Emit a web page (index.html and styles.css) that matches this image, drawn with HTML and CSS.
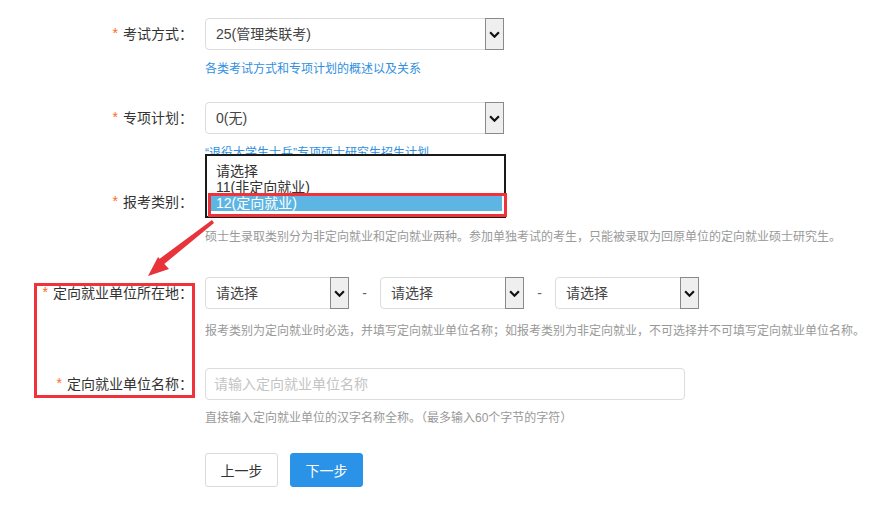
FILE: index.html
```html
<!DOCTYPE html>
<html lang="zh">
<head>
<meta charset="utf-8">
<title>报考信息</title>
<link rel="stylesheet" href="styles.css">
</head>
<body>
<div class="page">
  <form class="form">
    <div class="row r1">
      <label class="label"><span class="star">*</span>考试方式：</label>
      <div class="field">
        <div class="select w-full"><span class="sel-text">25(管理类联考)</span><span class="sel-btn"><svg viewBox="0 0 10 6" width="11" height="7"><path d="M1 1 L5 5 L9 1" fill="none" stroke="#111" stroke-width="2"/></svg></span></div>
        <a class="link" href="#">各类考试方式和专项计划的概述以及关系</a>
      </div>
    </div>
    <div class="row r2">
      <label class="label"><span class="star">*</span>专项计划：</label>
      <div class="field">
        <div class="select w-full"><span class="sel-text">0(无)</span><span class="sel-btn"><svg viewBox="0 0 10 6" width="11" height="7"><path d="M1 1 L5 5 L9 1" fill="none" stroke="#111" stroke-width="2"/></svg></span></div>
        <a class="link" href="#">“退役大学生士兵”专项硕士研究生招生计划</a>
      </div>
    </div>
    <div class="row r3">
      <label class="label"><span class="star">*</span>报考类别：</label>
      <div class="field">
        <div class="select w-full"><span class="sel-text">12(定向就业)</span><span class="sel-btn"><svg viewBox="0 0 10 6" width="11" height="7"><path d="M1 1 L5 5 L9 1" fill="none" stroke="#111" stroke-width="2"/></svg></span></div>
        <p class="help">硕士生录取类别分为非定向就业和定向就业两种。参加单独考试的考生，只能被录取为回原单位的定向就业硕士研究生。</p>
      </div>
    </div>
    <div class="row r4">
      <label class="label"><span class="star">*</span>定向就业单位所在地：</label>
      <div class="field">
        <div class="triple">
          <div class="select w-small"><span class="sel-text">请选择</span><span class="sel-btn"><svg viewBox="0 0 10 6" width="11" height="7"><path d="M1 1 L5 5 L9 1" fill="none" stroke="#111" stroke-width="2"/></svg></span></div>
          <span class="dash">-</span>
          <div class="select w-small"><span class="sel-text">请选择</span><span class="sel-btn"><svg viewBox="0 0 10 6" width="11" height="7"><path d="M1 1 L5 5 L9 1" fill="none" stroke="#111" stroke-width="2"/></svg></span></div>
          <span class="dash">-</span>
          <div class="select w-small"><span class="sel-text">请选择</span><span class="sel-btn"><svg viewBox="0 0 10 6" width="11" height="7"><path d="M1 1 L5 5 L9 1" fill="none" stroke="#111" stroke-width="2"/></svg></span></div>
        </div>
        <p class="help">报考类别为定向就业时必选，并填写定向就业单位名称；如报考类别为非定向就业，不可选择并不可填写定向就业单位名称。</p>
      </div>
    </div>
    <div class="row r5">
      <label class="label"><span class="star">*</span>定向就业单位名称：</label>
      <div class="field">
        <input class="input" type="text" placeholder="请输入定向就业单位名称">
        <p class="help">直接输入定向就业单位的汉字名称全称。（最多输入60个字节的字符）</p>
      </div>
    </div>
    <div class="row actions">
      <span></span>
      <div class="buttons">
        <button type="button" class="btn btn-prev">上一步</button>
        <button type="button" class="btn btn-next">下一步</button>
      </div>
    </div>
  </form>

  <div class="popup">
    <div class="opt">请选择</div>
    <div class="opt">11(非定向就业)</div>
    <div class="opt opt-selected">12(定向就业)</div>
    <div class="mark-opt"></div>
  </div>

  <div class="mark-labels"></div>

  <svg class="arrow" width="875" height="507" viewBox="0 0 875 507">
    <polygon points="212,220 214,223 163,265 158,260" fill="#e8333a"/>
    <polygon points="148,276 158,257 169,269" fill="#e8333a"/>
  </svg>
</div>
</body>
</html>
```
FILE: styles.css
```css
* { box-sizing: border-box; }
html, body { margin: 0; padding: 0; background: #fff; }
body {
  font-family: "Liberation Sans", "Noto Sans CJK SC", sans-serif;
  font-size: 14px;
  color: #333;
}
.page {
  position: relative;
  width: 875px;
  height: 507px;
  overflow: hidden;
  padding-top: 18px;
}
.form { margin: 0; }
.row {
  display: grid;
  grid-template-columns: 193px 1fr;
  column-gap: 12px;
  align-items: start;
}
.label {
  height: 32px;
  line-height: 32px;
  text-align: right;
  color: #333;
  font-size: 14px;
  white-space: nowrap;
}
.star {
  color: #ff6a1a;
  font-size: 14px;
  margin-right: 5px;
  position: relative;
  top: -1px;
}
.field { display: flex; flex-direction: column; align-items: flex-start; }
.select {
  height: 32px;
  border: 1px solid #dcdcdc;
  border-radius: 4px;
  display: flex;
  align-items: stretch;
  background: #fff;
}
.w-full { width: 299px; }
.w-small { width: 144px; }
.sel-text {
  flex: 1;
  padding-left: 10px;
  line-height: 30px;
  color: #444;
  font-size: 14px;
  white-space: nowrap;
}
.sel-btn {
  width: 19px;
  margin: -1px -1px -1px 0;
  background: #efefef;
  border: 1px solid #8a8a8a;
  display: flex;
  align-items: center;
  justify-content: center;
}
.link {
  display: block;
  margin-top: 10px;
  line-height: 18px;
  font-size: 12px;
  color: #2f8fe0;
  text-decoration: none;
  white-space: nowrap;
}
.help {
  margin: 10px 0 0;
  line-height: 18px;
  font-size: 12px;
  color: #999;
  white-space: nowrap;
}
.r1, .r2 { margin-bottom: 24px; }
.r3 { margin-bottom: 31px; }
.r4 .help { margin-top: 13px; }
.r4 { margin-bottom: 28px; }
.r5 .help { margin-top: 9px; }
.r5 { margin-bottom: 26px; }
.triple { display: flex; align-items: center; }
.dash {
  width: 31px;
  text-align: center;
  color: #666;
  font-size: 14px;
}
.input {
  width: 480px;
  height: 32px;
  border: 1px solid #dcdcdc;
  border-radius: 4px;
  padding: 0 8px;
  font-family: inherit;
  font-size: 14px;
  color: #333;
  outline: none;
}
.input::placeholder { color: #c4c4c4; }
.buttons { display: flex; gap: 12px; }
.btn {
  width: 73px;
  height: 34px;
  border-radius: 3px;
  font-family: inherit;
  font-size: 14px;
  cursor: pointer;
}
.btn-prev { background: #fff; border: 1px solid #dadada; color: #333; }
.btn-next { background: #2b93e7; border: 1px solid #2b93e7; color: #fff; }

/* opened list, drawn over the form */
.popup {
  position: absolute;
  left: 205px;
  top: 154px;
  width: 301px;
  height: 64px;
  border: 2px solid #1a1a1a;
  background: #fff;
  padding: 7px 2px 0 3px;
}
.opt {
  height: 16px;
  line-height: 16px;
  padding-left: 6px;
  font-size: 14px;
  color: #333;
  white-space: nowrap;
}
.opt-selected { background: #5cb5e2; color: #fff; }
.mark-opt {
  position: absolute;
  left: 1px;
  top: 37px;
  width: 299px;
  height: 24px;
  border: 3px solid #f0323a;
}
.mark-labels {
  position: absolute;
  left: 34px;
  top: 283px;
  width: 161px;
  height: 115px;
  border: 3px solid #f0323a;
}
.arrow { position: absolute; left: 0; top: 0; pointer-events: none; }
```
